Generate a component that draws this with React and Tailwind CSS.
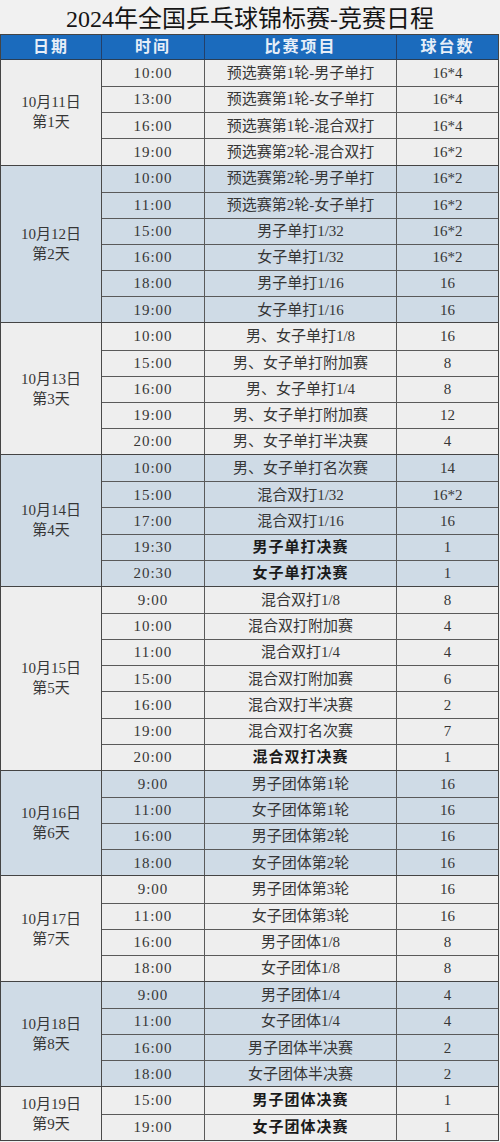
const days = [
  {
    date: "10月11日",
    day: "第1天",
    rows: [
      ["10:00", "预选赛第1轮-男子单打", "16*4"],
      ["13:00", "预选赛第1轮-女子单打", "16*4"],
      ["16:00", "预选赛第1轮-混合双打", "16*4"],
      ["19:00", "预选赛第2轮-混合双打", "16*2"],
    ],
  },
  {
    date: "10月12日",
    day: "第2天",
    rows: [
      ["10:00", "预选赛第2轮-男子单打", "16*2"],
      ["11:00", "预选赛第2轮-女子单打", "16*2"],
      ["15:00", "男子单打1/32", "16*2"],
      ["16:00", "女子单打1/32", "16*2"],
      ["18:00", "男子单打1/16", "16"],
      ["19:00", "女子单打1/16", "16"],
    ],
  },
  {
    date: "10月13日",
    day: "第3天",
    rows: [
      ["10:00", "男、女子单打1/8", "16"],
      ["15:00", "男、女子单打附加赛", "8"],
      ["16:00", "男、女子单打1/4", "8"],
      ["19:00", "男、女子单打附加赛", "12"],
      ["20:00", "男、女子单打半决赛", "4"],
    ],
  },
  {
    date: "10月14日",
    day: "第4天",
    rows: [
      ["10:00", "男、女子单打名次赛", "14"],
      ["15:00", "混合双打1/32", "16*2"],
      ["17:00", "混合双打1/16", "16"],
      ["19:30", "男子单打决赛", "1", true],
      ["20:30", "女子单打决赛", "1", true],
    ],
  },
  {
    date: "10月15日",
    day: "第5天",
    rows: [
      ["9:00", "混合双打1/8", "8"],
      ["10:00", "混合双打附加赛", "4"],
      ["11:00", "混合双打1/4", "4"],
      ["15:00", "混合双打附加赛", "6"],
      ["16:00", "混合双打半决赛", "2"],
      ["19:00", "混合双打名次赛", "7"],
      ["20:00", "混合双打决赛", "1", true],
    ],
  },
  {
    date: "10月16日",
    day: "第6天",
    rows: [
      ["9:00", "男子团体第1轮", "16"],
      ["11:00", "女子团体第1轮", "16"],
      ["16:00", "男子团体第2轮", "16"],
      ["18:00", "女子团体第2轮", "16"],
    ],
  },
  {
    date: "10月17日",
    day: "第7天",
    rows: [
      ["9:00", "男子团体第3轮", "16"],
      ["11:00", "女子团体第3轮", "16"],
      ["16:00", "男子团体1/8", "8"],
      ["18:00", "女子团体1/8", "8"],
    ],
  },
  {
    date: "10月18日",
    day: "第8天",
    rows: [
      ["9:00", "男子团体1/4", "4"],
      ["11:00", "女子团体1/4", "4"],
      ["16:00", "男子团体半决赛", "2"],
      ["18:00", "女子团体半决赛", "2"],
    ],
  },
  {
    date: "10月19日",
    day: "第9天",
    rows: [
      ["15:00", "男子团体决赛", "1", true],
      ["19:00", "女子团体决赛", "1", true],
    ],
  },
];

const font = { fontFamily: '"Liberation Serif", "Noto Sans CJK SC", serif' };

export default function App() {
  return (
    <div className="w-[500px] h-[1142px] bg-[#f1f1f1] text-[#363636] overflow-hidden" style={font}>
      <h1 className="h-[34px] flex items-center justify-center text-[24px] leading-none text-[#151515] pt-[3px]">
        2024年全国乒乓球锦标赛-竞赛日程
      </h1>
      <div className="w-[499px] border border-b-[1.5px] border-[#444]">
        <div className="flex h-[25px] bg-[#1b6bbd] text-[#e6eef8] text-[16px] font-bold border-b border-[#2a3e55]">
          <div className="w-[101px] flex items-center justify-center border-r border-[#23406a] tracking-[2px]">日期</div>
          <div className="w-[103px] flex items-center justify-center border-r border-[#23406a] tracking-[2px]">时间</div>
          <div className="w-[192px] flex items-center justify-center border-r border-[#23406a] tracking-[2px]">比赛项目</div>
          <div className="flex-1 flex items-center justify-center tracking-[2px]">球台数</div>
        </div>
        {days.map((d, i) => (
          <div
            key={d.date}
            className={`flex ${i > 0 ? "border-t border-[#444]" : ""} ${
              i % 2 ? "bg-[#cfdbe6]" : "bg-[#eeeeee]"
            }`}
          >
            <div className="w-[101px] flex flex-col items-center justify-center border-r-[1.5px] border-[#4a4a4a] text-[15px] leading-[20px]">
              <span>{d.date}</span>
              <span>{d.day}</span>
            </div>
            <div className="flex-1 flex flex-col">
              {d.rows.map((r, j) => (
                <div
                  key={j}
                  className={`flex h-[26.15px] text-[15px] ${j > 0 ? "border-t border-[#5a5a5a]" : ""}`}
                >
                  <div className="w-[103px] flex items-center justify-center border-r border-[#5a5a5a] tracking-[1px]">
                    {r[0]}
                  </div>
                  <div
                    className={`w-[192px] flex items-center justify-center border-r border-[#5a5a5a] ${
                      r[3] ? "font-bold text-[#1a1a1a] tracking-[1px]" : ""
                    }`}
                  >
                    {r[1]}
                  </div>
                  <div className="flex-1 flex items-center justify-center">{r[2]}</div>
                </div>
              ))}
            </div>
          </div>
        ))}
      </div>
    </div>
  );
}
